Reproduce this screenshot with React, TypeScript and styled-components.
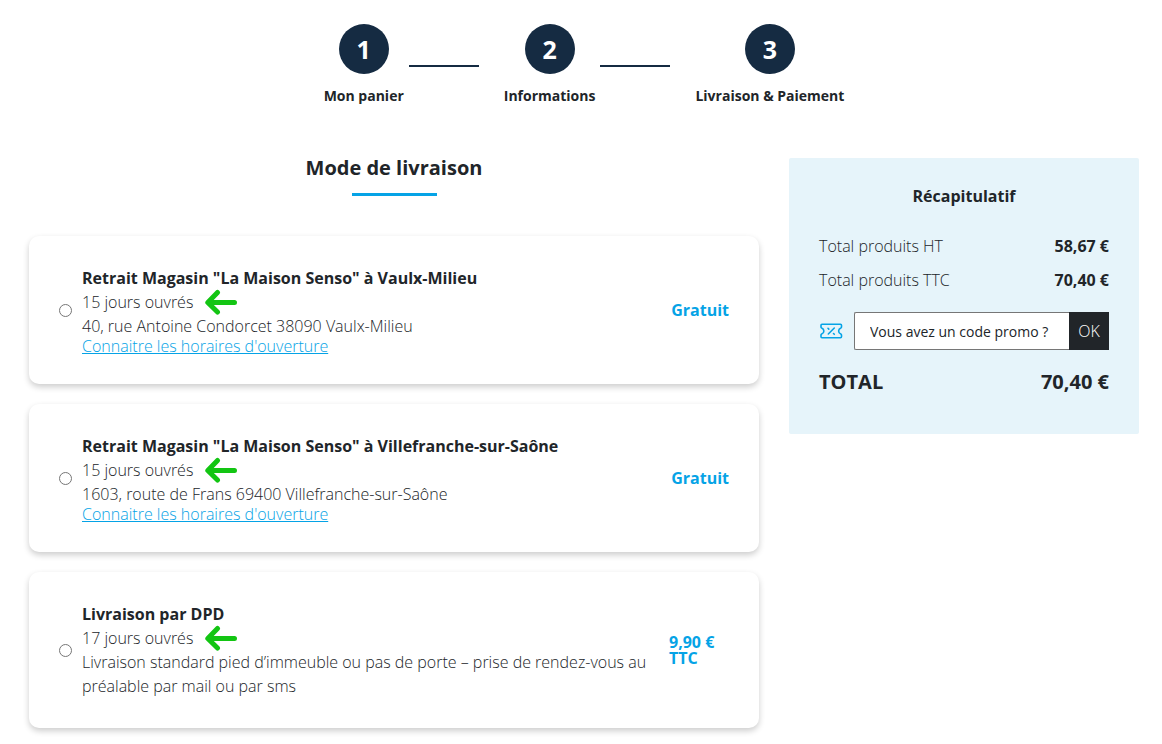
import React, { Fragment } from "react";
import styled, { createGlobalStyle } from "styled-components";

const ink = "#212529";
const navy = "#152b42";
const blue = "#05a3e6";

const GlobalStyle = createGlobalStyle`
  *, *::before, *::after { box-sizing: border-box; }
  body {
    margin: 0;
    background: #fff;
    color: ${ink};
    font-family: "Open Sans", "Noto Sans", sans-serif;
    font-size: 16px;
    font-weight: 300;
    line-height: 24px;
  }
`;

const Page = styled.div`
  padding: 24px 23px 16px 29px;
`;

const Steps = styled.ol`
  display: flex;
  justify-content: center;
  margin: 0 0 50px;
  padding: 0;
  list-style: none;
`;

const Step = styled.li`
  display: flex;
  flex-direction: column;
  align-items: center;
  gap: 10px;
  font-size: 14px;
  font-weight: 700;
`;

const StepNumber = styled.span`
  display: grid;
  place-items: center;
  width: 50px;
  height: 50px;
  border-radius: 50%;
  background: ${navy};
  color: #fff;
  font-size: 25px;
  line-height: 50px;
`;

const StepLine = styled.li`
  width: 70px;
  height: 2px;
  margin: 41px 25px 0 5px;
  background: ${navy};
`;

const Columns = styled.div`
  display: grid;
  grid-template-columns: minmax(0, 1fr) 350px;
  align-items: start;
  gap: 30px;
`;

const Heading = styled.h1`
  display: flex;
  flex-direction: column;
  align-items: center;
  gap: 15px;
  margin: 0 0 40px;
  font-size: 20px;
  font-weight: 700;
  line-height: 20px;

  &::after {
    content: "";
    width: 85px;
    height: 3px;
    background: ${blue};
  }
`;

const Options = styled.form`
  display: grid;
  gap: 20px;
`;

const Card = styled.label`
  display: flex;
  align-items: center;
  padding: 30px;
  border-radius: 10px;
  box-shadow: 0 3px 6px rgba(0, 0, 0, 0.2);
`;

const Radio = styled.input`
  flex: none;
  width: 13px;
  height: 13px;
  margin: 0 10px 0 0;
`;

const Details = styled.span`
  display: flex;
  flex: 1;
  flex-direction: column;
  align-items: flex-start;
  margin-right: 20px;
`;

const Name = styled.strong`
  font-weight: 700;
`;

const Delay = styled.span`
  display: flex;
  align-items: center;
  gap: 12px;
  height: 24px;
`;

const HoursLink = styled.a`
  color: ${blue};
  line-height: 16px;
`;

const Price = styled.span`
  display: flex;
  flex: none;
  justify-content: flex-end;
  width: 60px;
  color: ${blue};
  font-weight: 700;
  line-height: 16px;
`;

const Summary = styled.aside`
  padding: 30px 30px 40px;
  border-radius: 2px;
  background: #e6f4fa;
`;

const SummaryTitle = styled.h2`
  margin: 0 0 30px;
  font-size: 16px;
  font-weight: 700;
  line-height: 16px;
  text-align: center;
`;

const Line = styled.div<{ $total?: boolean }>`
  display: flex;
  justify-content: space-between;
  margin-bottom: ${(p) => (p.$total ? 0 : 10)}px;
  font-size: ${(p) => (p.$total ? 20 : 16)}px;
  font-weight: ${(p) => (p.$total ? 700 : 300)};

  strong {
    font-weight: 700;
  }
`;

const Promo = styled.form`
  display: flex;
  align-items: center;
  margin: 20px 0;
`;

const PromoInput = styled.input`
  flex: 1;
  min-width: 0;
  height: 38px;
  margin-left: 11px;
  padding: 0 15px;
  border: 1px solid #767676;
  border-right: 0;
  border-radius: 2px 0 0 2px;
  background: #fff;
  color: ${ink};
  font: 400 14px "Open Sans", "Noto Sans", sans-serif;

  &::placeholder {
    color: ${ink};
    opacity: 1;
  }
`;

const PromoButton = styled.button`
  width: 40px;
  height: 38px;
  padding: 0;
  border: 0;
  background: ${ink};
  color: #fff;
  font: inherit;
`;

const Arrow = () => (
  <svg width="32" height="26" viewBox="0 0 32 26" fill="none" stroke="#13c513" strokeWidth="5" strokeLinecap="round" strokeLinejoin="round" aria-hidden="true">
    <path d="M29.500 13.500H4M12.500 3.500 2.800 13.500 12.500 23" />
  </svg>
);

const Ticket = () => (
  <svg width="24" height="16" viewBox="0 0 24 16" fill="none" stroke={blue} strokeWidth="1.6" strokeLinecap="round" strokeLinejoin="round" aria-hidden="true">
    <path d="M3 1.200h18.500q1 0 1 1v1.700q0 .7-.7 1a3.300 3.300 0 0 0 0 6.200q.7.3.7 1v1.700q0 1-1 1H3q-1 0-1-1v-1.700q0-.7.7-1a3.300 3.300 0 0 0 0-6.200q-.7-.3-.7-1V2.200q0-1 1-1Z" />
    <path d="m9.300 11 6-6M9 5.300l.8.800M14.500 10.500l.8.800" />
  </svg>
);

const steps = ["Mon panier", "Informations", "Livraison & Paiement"];

const options = [
  {
    id: "vaulx",
    name: 'Retrait Magasin "La Maison Senso" à Vaulx-Milieu',
    delay: "15 jours ouvrés",
    text: "40, rue Antoine Condorcet 38090 Vaulx-Milieu",
    hours: true,
    price: "Gratuit",
  },
  {
    id: "villefranche",
    name: 'Retrait Magasin "La Maison Senso" à Villefranche-sur-Saône',
    delay: "15 jours ouvrés",
    text: "1603, route de Frans 69400 Villefranche-sur-Saône",
    hours: true,
    price: "Gratuit",
  },
  {
    id: "dpd",
    name: "Livraison par DPD",
    delay: "17 jours ouvrés",
    text: "Livraison standard pied d’immeuble ou pas de porte – prise de rendez-vous au préalable par mail ou par sms",
    hours: false,
    price: "9,90 € TTC",
  },
];

export default function App() {
  return (
    <Page>
      <GlobalStyle />
      <Steps>
        {steps.map((label, i) => (
          <Fragment key={label}>
            {i > 0 && <StepLine aria-hidden="true" />}
            <Step>
              <StepNumber>{i + 1}</StepNumber>
              {label}
            </Step>
          </Fragment>
        ))}
      </Steps>
      <Columns>
        <main>
          <Heading>Mode de livraison</Heading>
          <Options>
            {options.map((o) => (
              <Card key={o.id} htmlFor={o.id}>
                <Radio type="radio" name="delivery" id={o.id} />
                <Details>
                  <Name>{o.name}</Name>
                  <Delay>
                    {o.delay}
                    <Arrow />
                  </Delay>
                  <span>{o.text}</span>
                  {o.hours && <HoursLink href="#horaires">Connaitre les horaires d'ouverture</HoursLink>}
                </Details>
                <Price>
                  <span>{o.price}</span>
                </Price>
              </Card>
            ))}
          </Options>
        </main>
        <Summary>
          <SummaryTitle>Récapitulatif</SummaryTitle>
          <Line>
            <span>Total produits HT</span>
            <strong>58,67 €</strong>
          </Line>
          <Line>
            <span>Total produits TTC</span>
            <strong>70,40 €</strong>
          </Line>
          <Promo>
            <Ticket />
            <PromoInput type="text" aria-label="Code promo" placeholder="Vous avez un code promo ?" />
            <PromoButton type="button">OK</PromoButton>
          </Promo>
          <Line $total>
            <span>TOTAL</span>
            <strong>70,40 €</strong>
          </Line>
        </Summary>
      </Columns>
    </Page>
  );
}
